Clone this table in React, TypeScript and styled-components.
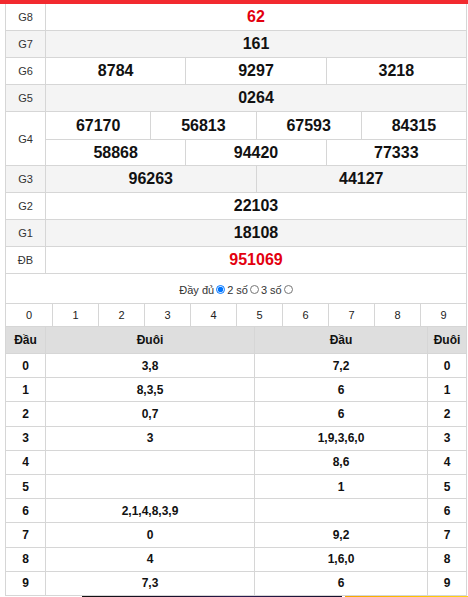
import React from "react";
import styled, { createGlobalStyle } from "styled-components";

const GlobalStyle = createGlobalStyle`
  html, body { margin: 0; padding: 0; background: #fff; }
  body { font-family: "Liberation Sans", Arial, sans-serif; color: #111; overflow: hidden; }
  * { box-sizing: border-box; }
`;

const LINE = "#d6d6d6";

const TopBar = styled.div`
  height: 4px;
  background: #f22a2f;
`;

const Box = styled.div`
  margin-left: 5px;
  width: 462px;
  border-left: 1px solid ${LINE};
  border-right: 1px solid ${LINE};
`;

const PrizeRow = styled.div<{ $alt?: boolean }>`
  display: flex;
  background: ${(p) => (p.$alt ? "#f4f4f4" : "#fff")};
  border-bottom: 1px solid ${LINE};
`;

const Label = styled.div`
  width: 40px;
  flex: none;
  border-right: 1px solid ${LINE};
  display: flex;
  align-items: center;
  justify-content: center;
  font-size: 11px;
  color: #333;
`;

const Values = styled.div`
  flex: 1;
  display: flex;
  flex-direction: column;
`;

const ValueLine = styled.div<{ $split?: boolean }>`
  display: flex;
  height: ${(p) => (p.$split ? "27px" : "26px")};
  & + & {
    border-top: 1px solid ${LINE};
  }
`;

const Num = styled.div<{ $red?: boolean }>`
  flex: 1;
  display: flex;
  align-items: center;
  justify-content: center;
  font-weight: 700;
  font-size: 16px;
  color: ${(p) => (p.$red ? "#e3000f" : "#111")};
  & + & {
    border-left: 1px solid ${LINE};
  }
`;

const Options = styled.div`
  height: 29px;
  display: flex;
  align-items: center;
  justify-content: center;
  font-size: 11px;
  color: #333;
  padding-top: 2px;
`;

const OptionLabel = styled.label`
  display: inline-flex;
  align-items: center;
  & + & { margin-left: 2px; }
`;

const Radio = styled.input`
  width: 9px;
  height: 9px;
  margin: 0 0 0 2px;
`;

const DigitRow = styled.div`
  display: grid;
  grid-template-columns: repeat(10, 1fr);
  border-top: 1px solid ${LINE};
  border-bottom: 1px solid ${LINE};
`;

const Digit = styled.div`
  height: 22px;
  display: flex;
  align-items: center;
  justify-content: center;
  font-size: 11px;
  color: #222;
  & + & { border-left: 1px solid ${LINE}; }
`;

const Loto = styled.div`
  display: grid;
  grid-template-columns: 40px 209px 173px 38px;
`;

const Head = styled.div<{ $last?: boolean }>`
  height: 27px;
  background: #dedede;
  display: flex;
  align-items: center;
  justify-content: center;
  font-weight: 700;
  font-size: 12px;
  color: #111;
  border-right: ${(p) => (p.$last ? "none" : `1px solid ${LINE}`)};
  border-bottom: 1px solid ${LINE};
`;

const Cell = styled.div<{ $last?: boolean }>`
  height: 24.2px;
  display: flex;
  align-items: center;
  justify-content: center;
  font-weight: 700;
  font-size: 12px;
  color: #111;
  border-right: ${(p) => (p.$last ? "none" : `1px solid ${LINE}`)};
  border-bottom: 1px solid ${LINE};
`;

const Banner = styled.div`
  display: flex;
  margin-left: 82px;
  height: 20px;
`;

const BannerDark = styled.div`
  width: 260px;
  background: linear-gradient(90deg, #111 0%, #1a1030 40%, #2a1c50 60%, #15102a 100%);
`;

const BannerGold = styled.div`
  margin-left: 3px;
  flex: 1;
  background: linear-gradient(90deg, #f5a400 0%, #ffc400 60%, #ffd21a 100%);
`;

type Prize = { label: string; lines: string[][]; red?: boolean };

const prizes: Prize[] = [
  { label: "G8", lines: [["62"]], red: true },
  { label: "G7", lines: [["161"]] },
  { label: "G6", lines: [["8784", "9297", "3218"]] },
  { label: "G5", lines: [["0264"]] },
  { label: "G4", lines: [["67170", "56813", "67593", "84315"], ["58868", "94420", "77333"]] },
  { label: "G3", lines: [["96263", "44127"]] },
  { label: "G2", lines: [["22103"]] },
  { label: "G1", lines: [["18108"]] },
  { label: "ĐB", lines: [["951069"]], red: true },
];

const loto: [string, string, string, string][] = [
  ["0", "3,8", "7,2", "0"],
  ["1", "8,3,5", "6", "1"],
  ["2", "0,7", "6", "2"],
  ["3", "3", "1,9,3,6,0", "3"],
  ["4", "", "8,6", "4"],
  ["5", "", "1", "5"],
  ["6", "2,1,4,8,3,9", "", "6"],
  ["7", "0", "9,2", "7"],
  ["8", "4", "1,6,0", "8"],
  ["9", "7,3", "6", "9"],
];

export default function App() {
  return (
    <>
      <GlobalStyle />
      <TopBar />
      <Box>
        {prizes.map((p, i) => (
          <PrizeRow key={p.label} $alt={i % 2 === 1}>
            <Label>{p.label}</Label>
            <Values>
              {p.lines.map((line, j) => (
                <ValueLine key={j} $split={p.lines.length > 1 && j === 0}>
                  {line.map((n) => (
                    <Num key={n} $red={p.red}>
                      {n}
                    </Num>
                  ))}
                </ValueLine>
              ))}
            </Values>
          </PrizeRow>
        ))}
        <Options>
          <OptionLabel>
            Đầy đủ
            <Radio type="radio" name="mode" defaultChecked />
          </OptionLabel>
          <OptionLabel>
            2 số
            <Radio type="radio" name="mode" />
          </OptionLabel>
          <OptionLabel>
            3 số
            <Radio type="radio" name="mode" />
          </OptionLabel>
        </Options>
        <DigitRow>
          {Array.from({ length: 10 }, (_, i) => (
            <Digit key={i}>{i}</Digit>
          ))}
        </DigitRow>
        <Loto>
          <Head>Đầu</Head>
          <Head>Đuôi</Head>
          <Head>Đầu</Head>
          <Head $last>Đuôi</Head>
          {loto.map((r) =>
            r.map((v, k) => (
              <Cell key={r[0] + "-" + k} $last={k === 3}>
                {v}
              </Cell>
            ))
          )}
        </Loto>
      </Box>
      <Banner>
        <BannerDark />
        <BannerGold />
      </Banner>
    </>
  );
}
